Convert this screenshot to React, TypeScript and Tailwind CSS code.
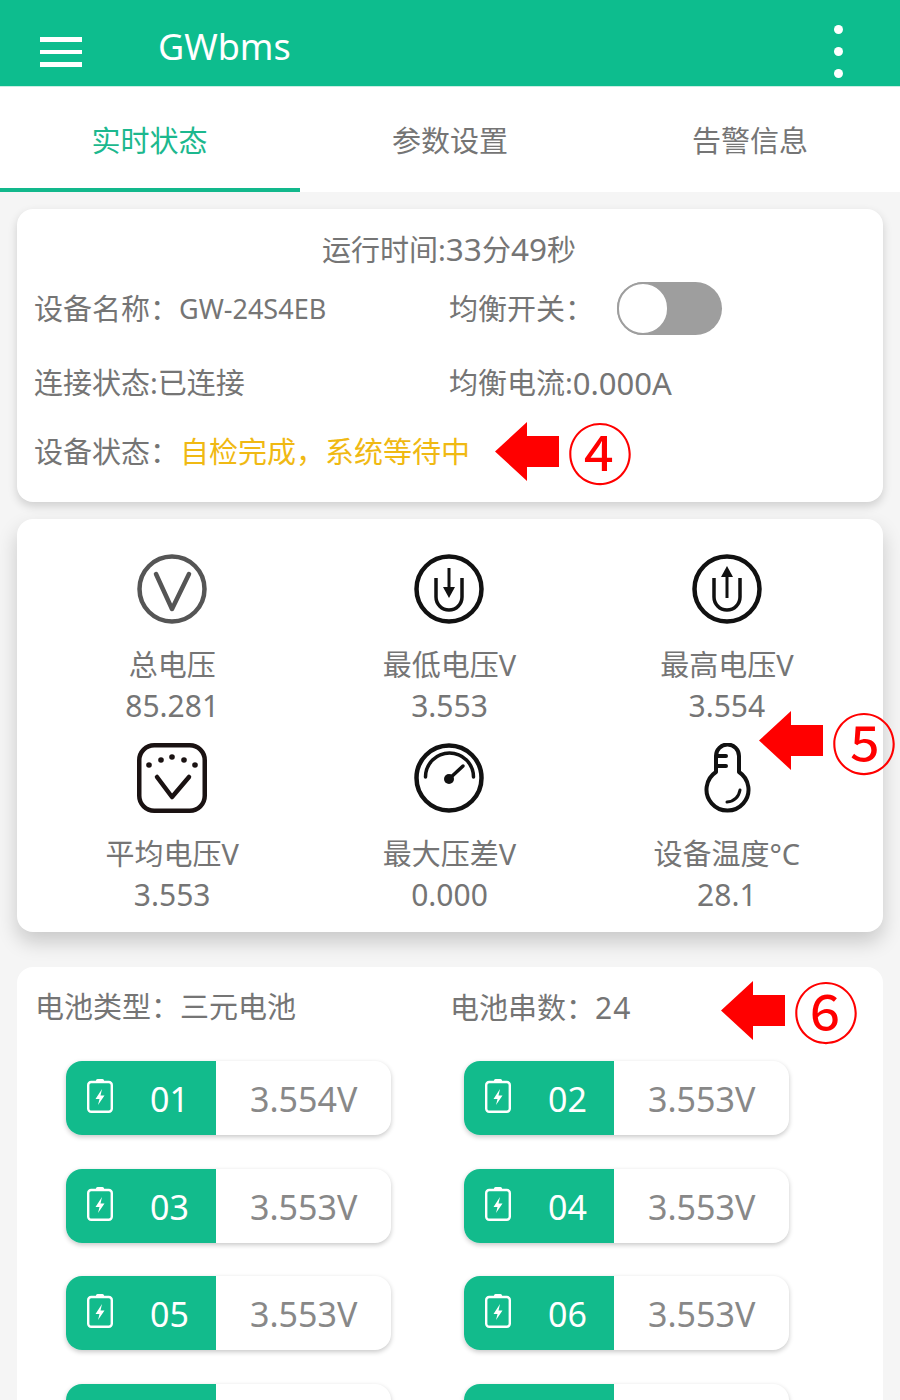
const FONT = "font-['Noto_Sans','Noto_Sans_CJK_SC',sans-serif]";

function Arrow() {
  return (
    <svg width="64" height="59" viewBox="0 0 64 59" className="block">
      <path d="M0 29.5 L32 0 V14 H64 V45 H32 V59 Z" fill="#ff0000" />
    </svg>
  );
}

function Mark({ glyph, className, glyphClass }: { glyph: string; className: string; glyphClass: string }) {
  return (
    <div className={`absolute flex items-center gap-[10px] ${className}`}>
      <Arrow />
      <span className={`flex h-[60px] w-[62px] items-center justify-center font-['Noto_Sans_CJK_SC',sans-serif] text-[66px] font-normal leading-none text-[#ff0000] ${glyphClass}`}>
        {glyph}
      </span>
    </div>
  );
}

const iconV = (
  <svg width="70" height="70" viewBox="0 0 70 70" fill="none" stroke="#555555" strokeWidth="4.5" strokeLinecap="round" strokeLinejoin="round">
    <circle cx="35" cy="35" r="32.5" />
    <path d="M19 20 L35 55 L52 20" />
  </svg>
);
const iconLow = (
  <svg width="70" height="70" viewBox="0 0 70 70" fill="none" stroke="#111111" strokeWidth="4.5">
    <circle cx="35" cy="35" r="32.5" />
    <path d="M22 24 V43 A13 13 0 0 0 48 43 V24" strokeWidth="3.5" />
    <path d="M35 14 V36" strokeWidth="3" />
    <path d="M29 33 H41 L35 44 Z" fill="#111111" stroke="none" />
  </svg>
);
const iconHigh = (
  <svg width="70" height="70" viewBox="0 0 70 70" fill="none" stroke="#111111" strokeWidth="4.5">
    <circle cx="35" cy="35" r="32.5" />
    <path d="M22 24 V43 A13 13 0 0 0 48 43 V24" strokeWidth="3.5" />
    <path d="M35 20 V44" strokeWidth="3" />
    <path d="M29 23 H41 L35 12 Z" fill="#111111" stroke="none" />
  </svg>
);
const iconAvg = (
  <svg width="70" height="70" viewBox="0 0 70 70" fill="none" stroke="#1a1212" strokeWidth="4.5" strokeLinecap="round" strokeLinejoin="round">
    <rect x="2.25" y="2.25" width="65.5" height="65.5" rx="15" />
    <path d="M20 34 L35 54 L52 34" />
    <g fill="#1a1212" stroke="none">
      <circle cx="12" cy="22" r="2.8" />
      <circle cx="24" cy="17" r="2.8" />
      <circle cx="35" cy="14" r="2.8" />
      <circle cx="47" cy="17" r="2.8" />
      <circle cx="58" cy="22" r="2.8" />
    </g>
  </svg>
);
const iconGauge = (
  <svg width="70" height="70" viewBox="0 0 70 70" fill="none" stroke="#111111" strokeWidth="4.5" strokeLinecap="round">
    <circle cx="35" cy="35" r="32.5" />
    <path d="M11.5 34 A24 24 0 0 1 59.5 34" strokeWidth="3.5" />
    <path d="M35 36 L49 23" strokeWidth="3.5" />
    <circle cx="35" cy="36" r="5" fill="#111111" stroke="none" />
  </svg>
);
const iconTemp = (
  <svg width="70" height="70" viewBox="0 0 70 70" fill="none" stroke="#111111" strokeWidth="4" strokeLinecap="round" strokeLinejoin="round">
    <path d="M24 13 A11.5 11.5 0 0 1 47 13 V29 A21 21 0 1 1 24 29 Z" />
    <path d="M25 13 H34 M25 23 H34" />
    <path d="M35 59 Q46 58 48 47" strokeWidth="3" />
  </svg>
);

const metrics = [
  { icon: iconV, label: "总电压", value: "85.281" },
  { icon: iconLow, label: "最低电压V", value: "3.553" },
  { icon: iconHigh, label: "最高电压V", value: "3.554" },
  { icon: iconAvg, label: "平均电压V", value: "3.553" },
  { icon: iconGauge, label: "最大压差V", value: "0.000" },
  { icon: iconTemp, label: "设备温度°C", value: "28.1" },
];

const cells = [
  ["01", "3.554V"],
  ["02", "3.553V"],
  ["03", "3.553V"],
  ["04", "3.553V"],
  ["05", "3.553V"],
  ["06", "3.553V"],
  ["", ""],
  ["", ""],
];

function BatteryIcon() {
  return (
    <svg width="26" height="35" viewBox="0 0 26 35" fill="none" stroke="#ffffff" strokeWidth="2.4" strokeLinejoin="round" className="mb-[5px]">
      <rect x="1.2" y="4" width="23.6" height="29.8" rx="3" />
      <path d="M9 4 V2.5 A1.5 1.5 0 0 1 10.5 1 H15.5 A1.5 1.5 0 0 1 17 2.5 V4 Z" fill="#ffffff" stroke="none" />
      <path d="M15 11 L8.5 21 H12.5 L11 27 L17.5 17.5 H13.5 Z" fill="#ffffff" stroke="none" />
    </svg>
  );
}

export default function App() {
  return (
    <div className={`${FONT} h-[1400px] w-[900px] overflow-hidden bg-[#f5f5f5] text-[#757575]`}>
      <header className="flex h-[86px] items-center bg-[#0dbd8e] pl-[40px] pr-[57px] text-white">
        <div className="mt-[18px] flex w-[42px] flex-col gap-[8px]">
          <span className="h-[4.5px] bg-white" />
          <span className="h-[4.5px] bg-white" />
          <span className="h-[4.5px] bg-white" />
        </div>
        <h1 className="ml-[76px] mt-[8px] flex-1 text-[36px] font-normal leading-none">GWbms</h1>
        <div className="mt-[16px] flex flex-col gap-[13px]">
          <span className="h-[9px] w-[9px] rounded-full bg-white" />
          <span className="h-[9px] w-[9px] rounded-full bg-white" />
          <span className="h-[9px] w-[9px] rounded-full bg-white" />
        </div>
      </header>

      <nav className="grid h-[106px] grid-cols-3 border-t border-[#c8efe3] bg-white text-[29px]">
        <div className="flex items-center justify-center border-b-[4px] border-[#12b88c] pr-[1px] pt-[6px] text-[#1cb88e]">实时状态</div>
        <div className="flex items-center justify-center pt-[2px]">参数设置</div>
        <div className="flex items-center justify-center pt-[2px]">告警信息</div>
      </nav>

      <main className="flex flex-col px-[17px] pt-[17px]">
        <section className="relative h-[293px] rounded-[16px] bg-white pl-[17px] pr-[19px] pt-[10px] text-[29px] shadow-[0_4px_10px_rgba(0,0,0,0.16)]">
          <div className="flex h-[60px] items-center justify-center leading-none">
            运行时间:<span className="text-[31.5px]">33</span>分<span className="text-[31.5px]">49</span>秒
          </div>
          <div className="mt-[1px] grid h-[56px] grid-cols-[415px_1fr]">
            <div className="flex items-center pt-[2px]">
              设备名称：<span className="text-[27px]">GW-24S4EB</span>
            </div>
            <div className="flex items-center">
              <span className="w-[168px] pt-[2px]">均衡开关：</span>
              <span className="relative h-[53px] w-[105px] rounded-full bg-[#9e9e9e]">
                <span className="absolute left-0 top-0 h-[53px] w-[52px] rounded-full border-2 border-[#9e9e9e] bg-white" />
              </span>
            </div>
          </div>
          <div className="mt-[19px] grid h-[56px] grid-cols-[415px_1fr]">
            <div className="flex items-center">连接状态:已连接</div>
            <div className="flex items-center">
              均衡电流:<span className="text-[31px]">0.000A</span>
            </div>
          </div>
          <div className="mt-[13px] flex h-[56px] items-center">
            设备状态：<span className="ml-[1px] text-[#f0b913]">自检完成，系统等待中</span>
          </div>
          <Mark glyph="④" className="left-[478px] top-[213px]" glyphClass="mt-[-4px]" />
        </section>

        <section className="relative mt-[17px] grid h-[413px] grid-cols-3 content-start rounded-[16px] bg-white pl-[16.5px] pr-[17.5px] pt-[35px] shadow-[0_10px_20px_rgba(0,0,0,0.18)]">
          {metrics.map((m) => (
            <div key={m.label} className="flex h-[189px] flex-col items-center">
              <div className="h-[70px] w-[70px]">{m.icon}</div>
              <div className="mt-[20px] h-[42px] text-[29px] leading-[42px]">{m.label}</div>
              <div className="h-[42px] text-[30px] leading-[40px]">{m.value}</div>
            </div>
          ))}
          <Mark glyph="⑤" className="left-[742px] top-[192px]" glyphClass="mt-[-1px]" />
        </section>

        <section className="relative mt-[35px] h-[600px] rounded-[16px] bg-white text-[29px]">
          <div className="grid h-[80px] grid-cols-[415px_1fr] items-center pl-[18px]">
            <div>电池类型：三元电池</div>
            <div>
              电池串数：<span className="text-[30px] tracking-[1px]">24</span>
            </div>
          </div>
          <div className="mt-[14px] grid grid-cols-[398px_325px] gap-y-[33.67px] pl-[49px]">
            {cells.map(([n, v], i) => (
              <div key={i} className="flex h-[74px] w-[325px] overflow-hidden rounded-[16px] bg-white shadow-[0_2px_5px_rgba(0,0,0,0.22)]">
                <div className="flex w-[150px] items-center bg-[#12bb8c] pl-[21px] text-white">
                  {n && <BatteryIcon />}
                  {n && <span className="ml-[37px] pt-[3px] text-[34px]">{n}</span>}
                </div>
                <div className="flex flex-1 items-center pl-[34px] pt-[3px] text-[34px] text-[#888888]">{v}</div>
              </div>
            ))}
          </div>
          <Mark glyph="⑥" className="left-[704px] top-[14px]" glyphClass="mt-[-4px]" />
        </section>
      </main>
    </div>
  );
}
